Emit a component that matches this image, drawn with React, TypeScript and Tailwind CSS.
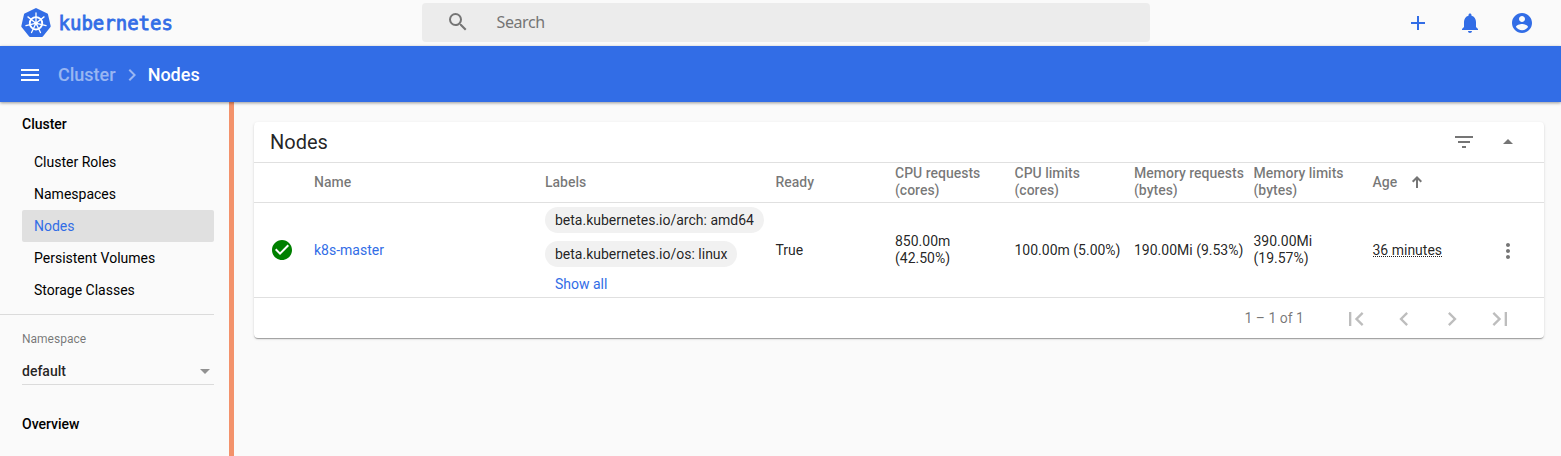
import React from "react";

const paths = {
  search: "M15.5 14h-.79l-.28-.27A6.471 6.471 0 0 0 16 9.5 6.5 6.5 0 1 0 9.5 16c1.61 0 3.09-.59 4.23-1.57l.27.28v.79l5 4.99L20.49 19l-4.99-5zm-6 0C7.01 14 5 11.99 5 9.5S7.01 5 9.5 5 14 7.01 14 9.5 11.99 14 9.5 14z",
  add: "M19 13h-6v6h-2v-6H5v-2h6V5h2v6h6v2z",
  bell: "M12 22c1.1 0 2-.9 2-2h-4c0 1.1.89 2 2 2zm6-6v-5c0-3.07-1.64-5.64-4.5-6.32V4c0-.83-.67-1.5-1.5-1.5s-1.5.67-1.5 1.5v.68C7.63 5.36 6 7.92 6 11v5l-2 2v1h16v-1l-2-2z",
  account: "M12 2C6.48 2 2 6.48 2 12s4.48 10 10 10 10-4.48 10-10S17.52 2 12 2zm0 3c1.66 0 3 1.34 3 3s-1.34 3-3 3-3-1.34-3-3 1.34-3 3-3zm0 14.2c-2.5 0-4.71-1.28-6-3.22.03-1.99 4-3.08 6-3.08 1.99 0 5.97 1.09 6 3.08-1.29 1.94-3.5 3.22-6 3.22z",
  menu: "M3 18h18v-2H3v2zm0-5h18v-2H3v2zm0-7v2h18V6H3z",
  right: "M10 6L8.59 7.41 13.17 12l-4.58 4.59L10 18l6-6z",
  left: "M15.41 7.41L14 6l-6 6 6 6 1.41-1.41L10.83 12z",
  first: "M18.41 16.59L13.82 12l4.59-4.59L17 6l-6 6 6 6zM6 6h2v12H6z",
  last: "M5.59 7.41L10.18 12l-4.59 4.59L7 18l6-6-6-6zM16 6h2v12h-2z",
  filter: "M10 18h4v-2h-4v2zM3 6v2h18V6H3zm3 7h12v-2H6v2z",
  up: "M7 14l5-5 5 5z",
  down: "M7 10l5 5 5-5z",
  check: "M12 2C6.48 2 2 6.48 2 12s4.48 10 10 10 10-4.48 10-10S17.52 2 12 2zm-2 15l-5-5 1.41-1.41L10 14.17l7.59-7.59L19 8l-9 9z",
  more: "M12 8c1.1 0 2-.9 2-2s-.9-2-2-2-2 .9-2 2 .9 2 2 2zm0 2c-1.1 0-2 .9-2 2s.9 2 2 2 2-.9 2-2-.9-2-2-2zm0 6c-1.1 0-2 .9-2 2s.9 2 2 2 2-.9 2-2-.9-2-2-2z",
};

function Icon({ name, className = "size-6" }: { name: keyof typeof paths; className?: string }) {
  return (
    <svg viewBox="0 0 24 24" fill="currentColor" className={`shrink-0 ${className}`}>
      <path d={paths[name]} />
    </svg>
  );
}

const spokes = [0, 1, 2, 3, 4, 5, 6];

function Logo() {
  return (
    <svg viewBox="0 0 30 30" className="size-[30px] shrink-0">
      <path
        d="M15 1.2 25.9 6.4 28.6 18.2 21 27.8H9L1.4 18.2 4.1 6.4Z"
        fill="#326de6"
        stroke="#326de6"
        strokeWidth="2.2"
        strokeLinejoin="round"
      />
      <g stroke="#fff" fill="none" strokeLinecap="round">
        <circle cx="15" cy="15.3" r="6.2" strokeWidth="1.9" />
        {spokes.map((i) => (
          <path key={i} d="M15 13.6V5" strokeWidth="1.3" transform={`rotate(${(i * 360) / 7} 15 15.3)`} />
        ))}
      </g>
      <circle cx="15" cy="15.3" r="1.9" fill="#fff" />
    </svg>
  );
}

const roles = ["Cluster Roles", "Namespaces", "Nodes", "Persistent Volumes", "Storage Classes"];

const columns =
  "grid grid-cols-[44px_231px_230.5px_119.5px_119.5px_119.5px_119.5px_119px_123.5px_auto] items-center pl-4 text-sm leading-[17px]";

export default function App() {
  return (
    <div className="flex h-[456px] w-[1561px] flex-col overflow-hidden bg-[#fafafa] font-['Roboto',sans-serif] text-black/87">
      <header className="flex h-[46px] shrink-0 items-center text-[#326de6]">
        <div className="flex w-[422px] items-center pl-[21px]">
          <Logo />
          <span className="ml-[7.5px] font-['DejaVu_Sans_Mono',monospace] text-[19px] leading-6 [-webkit-text-stroke:0.8px_#326de6]">kubernetes</span>
        </div>
        <div className="mb-px flex h-[39px] w-[728px] items-center rounded-sm bg-[#ececec] pl-6 text-[#757575]">
          <Icon name="search" className="mb-px size-6" />
          <span className="mb-0.5 ml-[26.5px] font-['Noto_Sans',sans-serif] text-base tracking-[-0.4px]">Search</span>
        </div>
        <div className="ml-auto flex gap-7 pr-[27px]">
          <Icon name="add" />
          <Icon name="bell" />
          <Icon name="account" />
        </div>
      </header>
      <nav className="z-10 flex h-14 shrink-0 items-center bg-[#326de6] pt-0.5 pl-[18px] text-lg font-medium text-white shadow-[0_1px_3px_rgba(0,0,0,0.4)]">
        <Icon name="menu" />
        <span className="ml-4 text-white/50">Cluster</span>
        <Icon name="right" className="mx-1 size-6 text-white/50" />
        <span>Nodes</span>
      </nav>
      <div className="flex min-h-0 flex-1">
        <aside className="flex w-[234px] shrink-0 flex-col border-r-[5px] border-[#f3926b] pr-[15px] text-sm text-black">
          <div className="mt-2 flex h-7 items-center pl-[22px] font-medium">Cluster</div>
          <ul className="mt-2 pl-[22px]">
            {roles.map((role) => (
              <li
                key={role}
                className={`flex h-8 items-center pl-3 ${role === "Nodes" ? "rounded-xs bg-[#e0e0e0] text-[#326de6]" : ""}`}
              >
                {role}
              </li>
            ))}
          </ul>
          <div className="mt-2 border-t border-black/12" />
          <div className="mt-4 ml-[22px] text-xs text-black/54">Namespace</div>
          <div className="mt-[11px] ml-[22px] flex h-[27px] items-center justify-between border-b border-black/12 font-medium text-black/87">
            default
            <Icon name="down" className="-mr-[3px] size-6 text-black/42" />
          </div>
          <div className="mt-[29px] ml-[22px] font-medium">Overview</div>
        </aside>
        <main className="flex-1 pt-5 pr-[17px] pl-5">
          <section className="rounded bg-white shadow-[0_2px_1px_-1px_rgba(0,0,0,0.2),0_1px_1px_0_rgba(0,0,0,0.14),0_1px_3px_0_rgba(0,0,0,0.12)]">
            <div className="flex h-10 items-center pr-6 pl-4 text-xl">
              <h1>Nodes</h1>
              <Icon name="filter" className="ml-auto size-6 text-black/54" />
              <Icon name="up" className="ml-5 size-6 text-black/54" />
            </div>
            <div className={`${columns} h-10 border-t border-black/12 pb-px font-medium text-black/54`}>
              <span />
              <span>Name</span>
              <span>Labels</span>
              <span>Ready</span>
              <span>CPU requests<br />(cores)</span>
              <span>CPU limits<br />(cores)</span>
              <span className="whitespace-nowrap">Memory requests<br />(bytes)</span>
              <span>Memory limits<br />(bytes)</span>
              <span className="flex items-center">
                Age
                <svg viewBox="0 0 12 12" className="mb-px ml-[14px] size-3" fill="none" stroke="currentColor" strokeWidth="2">
                  <path d="M6 12V1.5M1.7 5.8 6 1.5l4.3 4.3" />
                </svg>
              </span>
            </div>
            <div className={`${columns} h-[95px] border-t border-black/12`}>
              <Icon name="check" className="size-6 text-[#008000]" />
              <span className="text-[#326de6]">k8s-master</span>
              <div className="flex flex-col items-start self-start pt-1">
                <span className="mb-2 h-[26px] rounded-full bg-[#f1f1f1] px-[10px] leading-[26px] whitespace-nowrap">beta.kubernetes.io/arch: amd64</span>
                <span className="h-[26px] rounded-full bg-[#f1f1f1] pr-[9.5px] pl-[10px] leading-[26px]">beta.kubernetes.io/os: linux</span>
                <span className="mt-[9px] ml-[10px] text-[#326de6]">Show all</span>
              </div>
              <span>True</span>
              <span>850.00m<br />(42.50%)</span>
              <span className="whitespace-nowrap">100.00m (5.00%)</span>
              <span className="whitespace-nowrap">190.00Mi (9.53%)</span>
              <span>390.00Mi<br />(19.57%)</span>
              <span className="mb-px h-[14px] justify-self-start border-b border-dotted border-black/87 leading-[14px]">36 minutes</span>
              <Icon name="more" className="mt-0.5 size-6 text-black/54" />
            </div>
            <div className="flex h-[41px] items-center border-t border-black/12 pr-[30px] text-sm text-black/54">
              <span className="mr-[38px] ml-auto">1 – 1 of 1</span>
              <div className="flex gap-5 pt-0.5 text-black/26">
                <Icon name="first" className="size-7" />
                <Icon name="left" className="size-7" />
                <Icon name="right" className="size-7" />
                <Icon name="last" className="size-7" />
              </div>
            </div>
          </section>
        </main>
      </div>
    </div>
  );
}
